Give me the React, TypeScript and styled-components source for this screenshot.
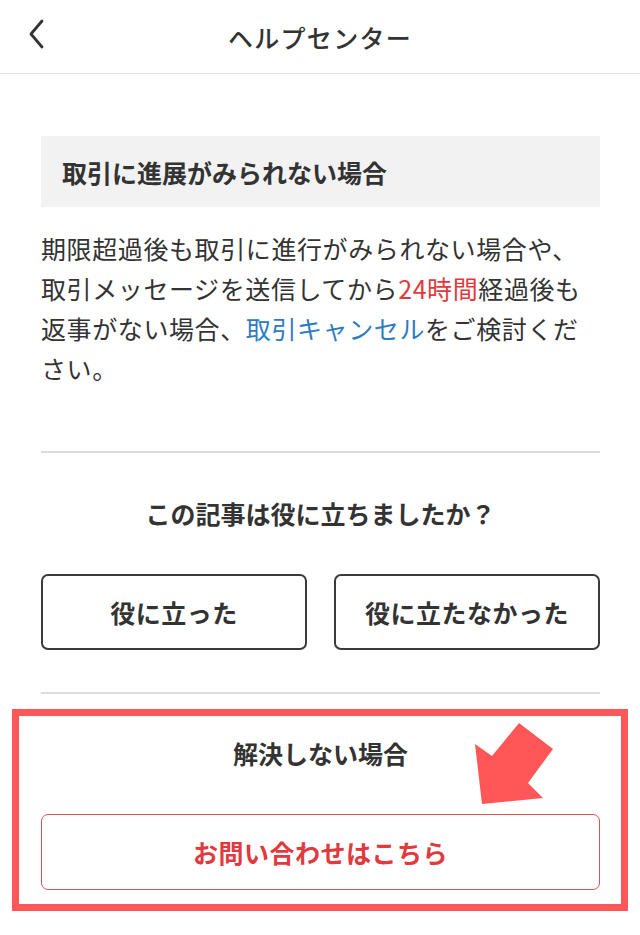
import styled, { createGlobalStyle } from 'styled-components';

const GlobalStyle = createGlobalStyle`
    html, body {
        margin: 0;
        padding: 0;
        background: #ffffff;
    }
    body {
        font-family: 'Noto Sans CJK JP', 'Noto Sans', sans-serif;
        color: #333333;
        -webkit-font-smoothing: antialiased;
    }
`;

const colors = {
    text: '#333333',
    red: '#e0393e',
    link: '#2e7cc0',
    divider: '#dcdcdc',
    highlight: '#ff5757',
};

const Page = styled.div`
    width: 640px;
    min-height: 935px;
    background: #ffffff;
`;

const Header = styled.header`
    position: relative;
    display: flex;
    align-items: center;
    justify-content: center;
    height: 73px;
    border-bottom: 1px solid #e2e2e2;
`;

const BackButton = styled.button`
    position: absolute;
    left: 21px;
    top: 18px;
    display: flex;
    align-items: center;
    justify-content: center;
    width: 30px;
    height: 32px;
    padding: 0;
    border: none;
    background: none;
    color: ${colors.text};
`;

const Title = styled.h1`
    margin: 0;
    font-size: 25px;
    font-weight: 500;
    letter-spacing: 1.3px;
    color: ${colors.text};
`;

const Main = styled.main`
    display: flex;
    flex-direction: column;
    padding: 62px 40px 0 41px;
`;

const SectionHeading = styled.h2`
    display: flex;
    align-items: center;
    height: 71px;
    margin: 0;
    padding: 0 21px;
    background: #f2f2f2;
    font-size: 25px;
    font-weight: 700;
    color: ${colors.text};
`;

const Body = styled.p`
    margin: 21px 0 0;
    font-size: 25px;
    line-height: 40px;
    letter-spacing: 0.6px;
    color: ${colors.text};
`;

const Accent = styled.span<{ $tone: 'red' | 'link' }>`
    color: ${({ $tone }) => colors[$tone]};
`;

const Divider = styled.hr`
    margin: 0;
    border: none;
    border-top: 2px solid ${colors.divider};
`;

const Feedback = styled.section`
    display: flex;
    flex-direction: column;
    margin-top: 63px;
`;

const Question = styled.h3`
    margin: 0;
    padding: 42px 0 43px;
    text-align: center;
    font-size: 25px;
    line-height: 36px;
    font-weight: 700;
    color: ${colors.text};
`;

const ButtonRow = styled.div`
    display: grid;
    grid-template-columns: 1fr 1fr;
    gap: 27px;
    margin-bottom: 42px;
`;

const OutlineButton = styled.button<{ $tone?: 'dark' | 'red' }>`
    display: flex;
    align-items: center;
    justify-content: center;
    height: 76px;
    padding: 0;
    border: ${({ $tone }) => ($tone === 'red' ? `1.5px solid #dc5058` : `2px solid #3a3a3a`)};
    border-radius: 7px;
    background: #ffffff;
    font-family: inherit;
    font-size: 25px;
    font-weight: 700;
    letter-spacing: 0.5px;
    color: ${({ $tone }) => ($tone === 'red' ? colors.red : colors.text)};
`;

const Highlight = styled.section`
    position: relative;
    display: flex;
    flex-direction: column;
    margin: 15px -28px 0 -29px;
    padding: 19px 21px 14px 22px;
    border: 7px solid ${colors.highlight};
`;

const HelpTitle = styled.h3`
    margin: 0 0 43px;
    text-align: center;
    font-size: 25px;
    line-height: 36px;
    font-weight: 700;
    color: ${colors.text};
`;

const Pointer = styled.svg`
    position: absolute;
    left: 456px;
    top: 5px;
    width: 90px;
    height: 90px;
`;

const BackIcon = () => (
    <svg width='20' height='32' viewBox='0 0 20 32' fill='none'>
        <path d='M16 3 L5 16 L16 29' stroke='currentColor' strokeWidth='2.8' strokeLinecap='round' strokeLinejoin='round' />
    </svg>
);

const App = () => {
    return (
        <Page>
            <GlobalStyle />
            <Header>
                <BackButton aria-label='戻る'>
                    <BackIcon />
                </BackButton>
                <Title>ヘルプセンター</Title>
            </Header>
            <Main>
                <SectionHeading>取引に進展がみられない場合</SectionHeading>
                <Body>
                    期限超過後も取引に進行がみられない場合や、取引メッセージを送信してから
                    <Accent $tone='red'>24時間</Accent>
                    経過後も返事がない場合、
                    <Accent $tone='link'>取引キャンセル</Accent>
                    をご検討ください。
                </Body>

                <Feedback>
                    <Divider />
                    <Question>この記事は役に立ちましたか？</Question>
                    <ButtonRow>
                        <OutlineButton>役に立った</OutlineButton>
                        <OutlineButton>役に立たなかった</OutlineButton>
                    </ButtonRow>
                    <Divider />
                </Feedback>

                <Highlight>
                    <HelpTitle>解決しない場合</HelpTitle>
                    <OutlineButton $tone='red'>お問い合わせはこちら</OutlineButton>
                    {/* annotation arrow pointing at the contact button */}
                    <Pointer viewBox='0 0 90 90'>
                        <polygon points='7,83 0,23 17,35 44,2 78,28 53,62 68,77' fill={colors.highlight} />
                    </Pointer>
                </Highlight>
            </Main>
        </Page>
    );
};

export default App;
